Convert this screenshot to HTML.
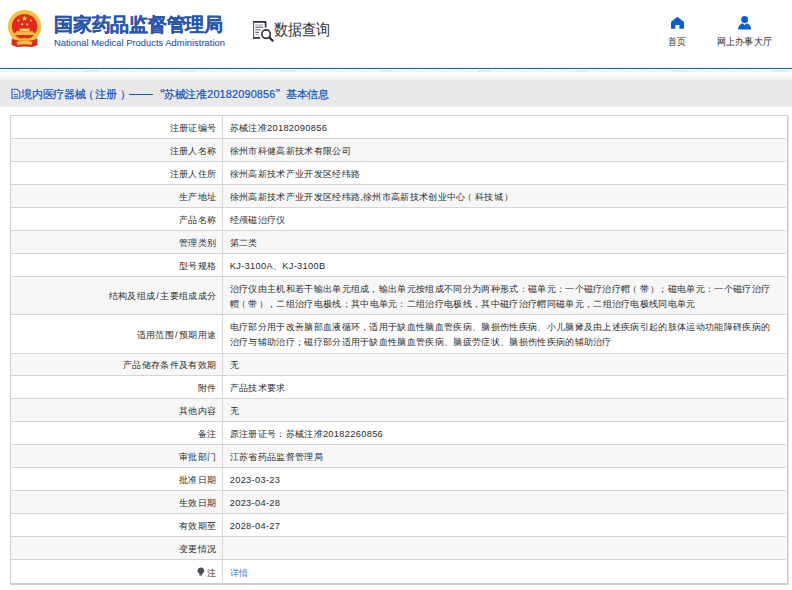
<!DOCTYPE html>
<html><head><meta charset="utf-8">
<style>
*{margin:0;padding:0;box-sizing:border-box}
html,body{width:792px;height:590px;overflow:hidden;background:#fff;font-family:"Liberation Sans",sans-serif}
.abs{position:absolute}
#title{left:54px;top:13px;font-size:18.8px;letter-spacing:-0.25px;font-weight:bold;color:#2856b0;-webkit-text-stroke:0.25px #2856b0;white-space:nowrap;line-height:24px}
#en{left:54px;top:37.3px;font-size:9.3px;color:#2856b0;-webkit-text-stroke:0.1px #2856b0;white-space:nowrap;line-height:12px;letter-spacing:0.05px}
#sq{left:274px;top:18px;font-size:13.9px;color:#333338;transform:scaleY(1.13);transform-origin:0 3px;line-height:20px;white-space:nowrap}
.nav{font-size:9.3px;color:#333;letter-spacing:0.3px;transform:scaleY(1.12);transform-origin:0 4px;line-height:12px;white-space:nowrap}
#bline{left:0;top:67.6px;width:792px;height:1.6px;background:#0a5fc8}
#hatch{left:0;top:69.5px;width:792px;height:2.5px;background:repeating-linear-gradient(135deg,transparent 0 1.3px,#dcdcdc 1.3px 2.1px)}
#grad{left:0;top:73.5px;width:792px;height:6.5px;background:linear-gradient(#fff,#f2f2f2)}
#bar{left:0;top:79.7px;width:792px;height:26.5px;background:#e9e9e9}
#btitle{left:-0.8px;top:86px;width:400px;height:16px;font-size:10.8px;color:#0a55c5;-webkit-text-stroke:0.2px #0a55c5;white-space:nowrap;line-height:16px}
#btitle span{position:absolute;top:0}
#tbl{position:absolute;left:10px;top:0;width:778px;height:590px;font-size:9.28px;color:#2b2b2b;letter-spacing:0.32px}
.r{position:absolute;left:0;width:776px;border-top:1px solid #d6d6d6;border-left:1px solid #d0d0d0}
.l{position:absolute;left:0;top:1px;width:205.2px;text-align:right;white-space:nowrap}
.v{position:absolute;left:218.7px;white-space:nowrap}
#vdiv{position:absolute;left:212px;top:115px;width:1px;height:468px;background:#d6d6d6}
#tbot{position:absolute;left:0;top:583px;width:778px;height:2px;background:#cccccc}
#rb{position:absolute;left:777px;top:115px;width:1px;height:470px;background:#c9c9cc}
#rb2{position:absolute;left:778px;top:116px;width:1px;height:469px;background:#e2e2e8}
#barb{left:0;top:106px;width:792px;height:1px;background:#eef3f9}
.lp{position:relative;left:-2.3px}
.rp{position:relative;left:1.3px}
a{color:#2a7cf0;text-decoration:none}
</style></head><body>
<!-- emblem -->
<svg class="abs" style="left:0;top:0" width="50" height="50" viewBox="0 0 50 50">
    <circle cx="24.6" cy="26.6" r="16.6" fill="#f4c13c"/>
  <circle cx="24.6" cy="26.6" r="12.7" fill="#e5281f"/>
  <path d="M11.8 38.5 Q24.6 43 37.4 38.5 L37.6 45 L32.5 47 Q24.6 45.8 16.7 47 L11.6 45 Z" fill="#dd2a22"/>
  <path d="M12.5 37.8 Q18 40.8 24.6 38.9 Q31 40.8 36.7 37.8" fill="none" stroke="#f4c13c" stroke-width="1.8"/>
  <rect x="19.6" y="28.6" width="10.2" height="2.6" fill="#f7d05a"/>
  <rect x="16" y="31.4" width="17.2" height="1.4" fill="#f7d05a"/>
  <rect x="14.5" y="32.6" width="20.4" height="2.4" fill="#f4c13c"/>
  <polygon points="24.7,15.3 25.5,17.4 27.6,17.5 26,18.8 26.5,20.8 24.7,19.7 22.9,20.8 23.4,18.8 21.8,17.5 23.9,17.4" fill="#f6d046"/>
  <circle cx="18.5" cy="20.5" r="1.1" fill="#f6d046"/><circle cx="30.9" cy="20.5" r="1.1" fill="#f6d046"/>
  <circle cx="22.1" cy="24.4" r="1.1" fill="#f6d046"/><circle cx="27.2" cy="24.4" r="1.1" fill="#f6d046"/>
  <path d="M16.5 42 Q24.6 39.5 32.5 42 L31.5 45 Q24.6 43.5 17.5 45 Z" fill="#f4c13c"/>
</svg>
<div id="title" class="abs">国家药品监督管理局</div>
<div id="en" class="abs">National Medical Products Administration</div>
<!-- data query icon -->
<svg class="abs" style="left:250px;top:18px" width="26" height="26" viewBox="0 0 26 26">
  <path d="M3.1 3.9 H15.9 M15.6 3.6 V9.5" fill="none" stroke="#2f2f3f" stroke-width="1.7"/>
  <path d="M3.6 3.5 V20.5" fill="none" stroke="#50505e" stroke-width="1"/>
  <path d="M3.1 19.9 H10.2" fill="none" stroke="#2f2f3f" stroke-width="1.7"/>
  <path d="M5.3 7 H13.2" stroke="#9a9aa4" stroke-width="1"/>
  <path d="M5.3 9.2 H13.2" stroke="#3a3a4a" stroke-width="0.9"/>
  <path d="M5.3 11.9 H10.8" stroke="#6a6a76" stroke-width="1"/>
  <path d="M5.3 14.3 H9" stroke="#3a3a4a" stroke-width="0.9"/>
  <path d="M5.3 16.7 H8.8" stroke="#a0a0aa" stroke-width="1"/>
  <circle cx="16.1" cy="16.1" r="4.25" fill="none" stroke="#2b2b3b" stroke-width="1.6"/>
  <path d="M19.2 19.2 L23.2 23.2" stroke="#2b2b3b" stroke-width="2.2"/>
</svg>
<div id="sq" class="abs">数据查询</div>
<!-- home icon -->
<svg class="abs" style="left:670px;top:16px" width="16" height="14" viewBox="0 0 16 14">
  <path d="M7.4 0.8 L14 6 V12.8 H9.4 V9 H5.4 V12.8 H1 V6 Z" fill="#0a5fce"/>
</svg>
<div class="abs nav" style="left:668px;top:35px">首页</div>
<!-- user icon -->
<svg class="abs" style="left:737px;top:15px" width="16" height="16" viewBox="0 0 16 16">
  <circle cx="7.6" cy="4.6" r="3.5" fill="#0a5fce"/>
  <path d="M1 14.5 Q1.5 9.5 5.6 8.3 L7.6 10.3 L9.6 8.3 Q13.8 9.5 14.2 14.5 Z" fill="#0a5fce"/>
</svg>
<div class="abs nav" style="left:716.5px;top:35px">网上办事大厅</div>

<div id="bline" class="abs"></div>
<div id="hatch" class="abs"></div>
<div id="grad" class="abs"></div>
<div id="bar" class="abs"></div><div id="barb" class="abs"></div>
<svg class="abs" style="left:11px;top:88px" width="10" height="11" viewBox="0 0 10 11">
  <path d="M0.9 1.3 H6.2 L8.8 3.9 V10.2 H0.9 Z" fill="none" stroke="#2a5ad0" stroke-width="1.1"/>
  <path d="M2.6 4.2 H3.8" stroke="#2a5ad0" stroke-width="1"/>
  <path d="M2.6 6.4 H7 M2.6 8.3 H7" stroke="#2a5ad0" stroke-width="0.9"/>
</svg>
<div id="btitle" class="abs"><span style="left:21.7px;letter-spacing:-0.17px">境内医疗器械</span><span style="left:83.3px">（</span><span style="left:95.5px;letter-spacing:-0.17px">注册</span><span style="left:120.5px">）</span><span style="left:130.2px;top:7.9px;width:24px;height:1.3px;background:#0a55c5"></span><span style="left:161px;font-size:13px;top:-0.5px">“</span><span style="left:164.5px;letter-spacing:-0.17px">苏械注准</span><span style="left:208px;letter-spacing:0.2px">20182090856</span><span style="left:276.5px;font-size:13px;top:-0.5px">”</span><span style="left:286.5px;letter-spacing:-0.17px">基本信息</span></div>

<div id="tbl">
<div class="r" style="top:115px;height:23px;background:#fff"><div class="l" style="top:0.6px;line-height:22px">注册证编号</div><div class="v" style="top:0.6px;line-height:22px">苏械注准20182090856</div></div>
<div class="r" style="top:138px;height:23px;background:#f7f7f7"><div class="l" style="top:0.6px;line-height:22px">注册人名称</div><div class="v" style="top:0.6px;line-height:22px">徐州市科健高新技术有限公司</div></div>
<div class="r" style="top:161px;height:23px;background:#fff"><div class="l" style="top:0.6px;line-height:22px">注册人住所</div><div class="v" style="top:0.6px;line-height:22px">徐州高新技术产业开发区经纬路</div></div>
<div class="r" style="top:184px;height:23px;background:#f7f7f7"><div class="l" style="top:0.6px;line-height:22px">生产地址</div><div class="v" style="top:0.6px;line-height:22px">徐州高新技术产业开发区经纬路,徐州市高新技术创业中心<span class="lp">（</span>科技城<span class="rp">）</span></div></div>
<div class="r" style="top:207px;height:23px;background:#fff"><div class="l" style="top:0.6px;line-height:22px">产品名称</div><div class="v" style="top:0.6px;line-height:22px">经颅磁治疗仪</div></div>
<div class="r" style="top:230px;height:23px;background:#f7f7f7"><div class="l" style="top:0.6px;line-height:22px">管理类别</div><div class="v" style="top:0.6px;line-height:22px">第二类</div></div>
<div class="r" style="top:253px;height:23px;background:#fff"><div class="l" style="top:0.6px;line-height:22px">型号规格</div><div class="v" style="top:0.6px;line-height:22px">KJ-3100A、KJ-3100B</div></div>
<div class="r" style="top:276px;height:38px;background:#f7f7f7"><div class="l" style="top:0.6px;line-height:37px">结构及组成<span style="padding:0 1px">/</span>主要组成成分</div><div class="v" style="top:1px;line-height:15.3px;padding-top:3.50px">治疗仪由主机和若干输出单元组成，输出单元按组成不同分为两种形式：磁单元：一个磁疗治疗帽<span class="lp">（</span>带<span class="rp">）</span>；磁电单元：一个磁疗治疗<br>帽<span class="lp">（</span>带<span class="rp">）</span>，二组治疗电极线；其中电单元：二组治疗电极线，其中磁疗治疗帽同磁单元，二组治疗电极线同电单元</div></div>
<div class="r" style="top:314px;height:39px;background:#fff"><div class="l" style="top:0.6px;line-height:38px">适用范围<span style="padding:0 1px">/</span>预期用途</div><div class="v" style="top:1px;line-height:15.3px;padding-top:4.00px">电疗部分用于改善脑部血液循环，适用于缺血性脑血管疾病、脑损伤性疾病、小儿脑瘫及由上述疾病引起的肢体运动功能障碍疾病的<br>治疗与辅助治疗；磁疗部分适用于缺血性脑血管疾病、脑疲劳症状、脑损伤性疾病的辅助治疗</div></div>
<div class="r" style="top:353px;height:22px;background:#f7f7f7"><div class="l" style="top:1.1px;line-height:21px">产品储存条件及有效期</div><div class="v" style="top:1.1px;line-height:21px">无</div></div>
<div class="r" style="top:375px;height:23px;background:#fff"><div class="l" style="top:1.1px;line-height:22px">附件</div><div class="v" style="top:1.1px;line-height:22px">产品技术要求</div></div>
<div class="r" style="top:398px;height:23px;background:#f7f7f7"><div class="l" style="top:1.1px;line-height:22px">其他内容</div><div class="v" style="top:1.1px;line-height:22px">无</div></div>
<div class="r" style="top:421px;height:23px;background:#fff"><div class="l" style="top:1.1px;line-height:22px">备注</div><div class="v" style="top:1.1px;line-height:22px">原注册证号：苏械注准20182260856</div></div>
<div class="r" style="top:444px;height:23px;background:#f7f7f7"><div class="l" style="top:1.1px;line-height:22px">审批部门</div><div class="v" style="top:1.1px;line-height:22px">江苏省药品监督管理局</div></div>
<div class="r" style="top:467px;height:23px;background:#fff"><div class="l" style="top:1.1px;line-height:22px">批准日期</div><div class="v" style="top:1.1px;line-height:22px">2023-03-23</div></div>
<div class="r" style="top:490px;height:23px;background:#f7f7f7"><div class="l" style="top:1.1px;line-height:22px">生效日期</div><div class="v" style="top:1.1px;line-height:22px">2023-04-28</div></div>
<div class="r" style="top:513px;height:23px;background:#fff"><div class="l" style="top:1.1px;line-height:22px">有效期至</div><div class="v" style="top:1.1px;line-height:22px">2028-04-27</div></div>
<div class="r" style="top:536px;height:23px;background:#f7f7f7"><div class="l" style="top:1.1px;line-height:22px">变更情况</div><div class="v" style="top:1.1px;line-height:22px"></div></div>
<div class="r" style="top:559px;height:24px;background:#fff"><div class="l" style="top:1.5px;line-height:23px"><svg width="8" height="9" viewBox="0 0 8 9" style="vertical-align:-0.5px;margin-right:1.8px"><path d="M3.9 0.6 C5.9 0.6 7.3 2 7.3 3.8 C7.3 5.1 6.4 5.8 5.6 6.6 L5.1 8.6 H2.7 L2.2 6.6 C1.4 5.8 0.5 5.1 0.5 3.8 C0.5 2 1.9 0.6 3.9 0.6 Z" fill="#4b4b55"/><path d="M2.7 7.6 H5.1 V8.6 H2.7 Z" fill="#8b8b95"/></svg>注</div><div class="v" style="top:1.5px;line-height:23px"><a>详情</a></div></div>
<div id="vdiv"></div><div id="tbot"></div><div id="rb"></div><div style="position:absolute;left:0;top:115px;width:778px;height:1px;background:#d0d0d0"></div><div id="rb2"></div>
</div>
</body></html>
